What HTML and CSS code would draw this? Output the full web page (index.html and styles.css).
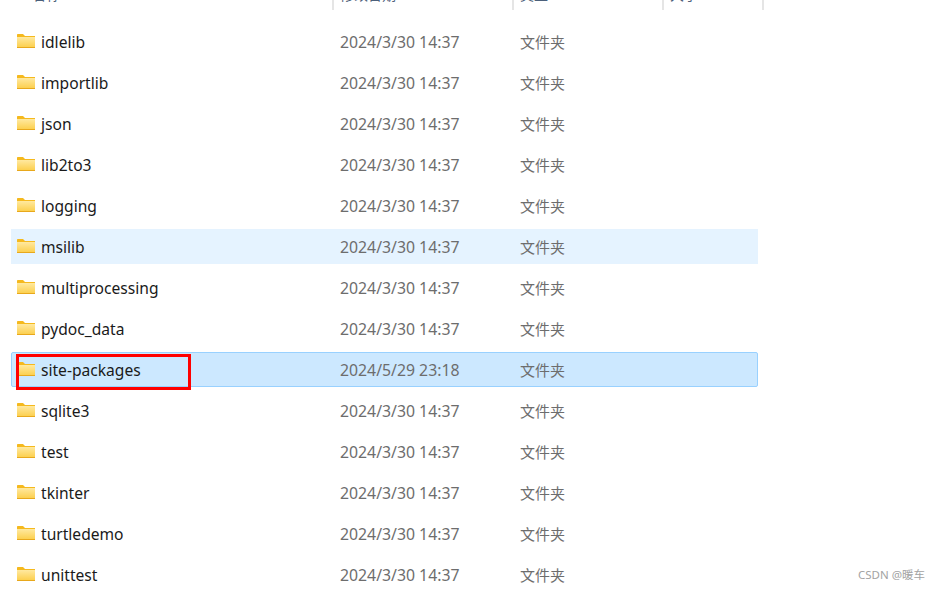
FILE: index.html
```html
<!DOCTYPE html>
<html lang="en">
<head>
    <meta charset="UTF-8">
    <title>Lib</title>
    <link rel="stylesheet" href="styles.css">
</head>
<body>

    <svg class="defs" width="0" height="0">
        <defs>
            <linearGradient id="folder-fill" x1="0" y1="0" x2="0" y2="1">
                <stop offset="0" stop-color="#ffe9a0"/>
                <stop offset="1" stop-color="#fcd050"/>
            </linearGradient>
        </defs>
        <symbol id="folder" viewBox="0 0 18 14">
            <path d="M0 1C0 .4.4 0 1 0H6L8 2H18V5H0Z" fill="#f5b91e"/>
            <path d="M0 3H18V13H0Z" fill="url(#folder-fill)"/>
            <path d="M0 13H18V14H0Z" fill="#e8a81c"/>
        </symbol>
    </svg>

    <!-- Column headers, cut off by the top edge -->
    <div class="header">
        <div class="col-name"><span class="head-text">名称</span></div>
        <div class="col-date"><span class="head-text">修改日期</span></div>
        <div class="col-type"><span class="head-text">类型</span></div>
        <div class="col-size"><span class="head-text">大小</span></div>
    </div>

    <div class="list">
        <div class="row"><svg class="folder"><use href="#folder"/></svg><span class="name">idlelib</span><span class="date">2024/3/30 14:37</span><span class="type">文件夹</span></div>
        <div class="row"><svg class="folder"><use href="#folder"/></svg><span class="name">importlib</span><span class="date">2024/3/30 14:37</span><span class="type">文件夹</span></div>
        <div class="row"><svg class="folder"><use href="#folder"/></svg><span class="name">json</span><span class="date">2024/3/30 14:37</span><span class="type">文件夹</span></div>
        <div class="row"><svg class="folder"><use href="#folder"/></svg><span class="name">lib2to3</span><span class="date">2024/3/30 14:37</span><span class="type">文件夹</span></div>
        <div class="row"><svg class="folder"><use href="#folder"/></svg><span class="name">logging</span><span class="date">2024/3/30 14:37</span><span class="type">文件夹</span></div>
        <div class="row hover"><svg class="folder"><use href="#folder"/></svg><span class="name">msilib</span><span class="date">2024/3/30 14:37</span><span class="type">文件夹</span></div>
        <div class="row"><svg class="folder"><use href="#folder"/></svg><span class="name">multiprocessing</span><span class="date">2024/3/30 14:37</span><span class="type">文件夹</span></div>
        <div class="row"><svg class="folder"><use href="#folder"/></svg><span class="name">pydoc_data</span><span class="date">2024/3/30 14:37</span><span class="type">文件夹</span></div>
        <div class="row selected">
            <svg class="folder"><use href="#folder"/></svg><span class="name">site-packages</span><span class="date">2024/5/29 23:18</span><span class="type">文件夹</span>
            <div class="red-box"></div>
        </div>
        <div class="row"><svg class="folder"><use href="#folder"/></svg><span class="name">sqlite3</span><span class="date">2024/3/30 14:37</span><span class="type">文件夹</span></div>
        <div class="row"><svg class="folder"><use href="#folder"/></svg><span class="name">test</span><span class="date">2024/3/30 14:37</span><span class="type">文件夹</span></div>
        <div class="row"><svg class="folder"><use href="#folder"/></svg><span class="name">tkinter</span><span class="date">2024/3/30 14:37</span><span class="type">文件夹</span></div>
        <div class="row"><svg class="folder"><use href="#folder"/></svg><span class="name">turtledemo</span><span class="date">2024/3/30 14:37</span><span class="type">文件夹</span></div>
        <div class="row"><svg class="folder"><use href="#folder"/></svg><span class="name">unittest</span><span class="date">2024/3/30 14:37</span><span class="type">文件夹</span></div>
    </div>

    <!-- Watermark -->
    <div class="watermark">CSDN @暖车</div>

</body>
</html>
```

FILE: styles.css
```css
body {
    margin: 0;
    height: 590px;
    overflow: hidden;
    background-color: #fff;
    font-family: "Noto Sans", "Noto Sans CJK SC", sans-serif;
    font-size: 15px;
    position: relative;
}

.defs {
    position: absolute;
}

/* Header */
.header {
    display: flex;
    height: 10px;
    overflow: hidden;
}

.header > div {
    box-sizing: border-box;
    height: 10px;
    border-right: 2px solid #e5e5e5;
    display: flex;
    align-items: flex-end;
    overflow: hidden;
}

.col-name {
    width: 334px;
    padding-left: 32px;
}

.col-date {
    width: 180px;
    padding-left: 6px;
}

.col-type {
    width: 150px;
    padding-left: 6px;
}

.col-size {
    width: 100px;
    padding-left: 6px;
}

.head-text {
    color: #4c607a;
    line-height: 20px;
    margin-bottom: 5px;
    flex: none;
    font-size: 14px;
}

/* File rows */
.list {
    display: flex;
    flex-direction: column;
    gap: 6px;
    width: 747px;
    margin: 14px 0 0 11px;
}

.row {
    position: relative;
    flex: none;
    box-sizing: border-box;
    height: 35px;
    display: flex;
    align-items: center;
    padding-left: 6px;
}

.row.hover {
    background-color: #e5f3ff;
}

.row.selected {
    background-color: #cce8ff;
    border: 1px solid #99d1ff;
    border-radius: 2px;
    padding-left: 5px;
}

.folder {
    flex: none;
    width: 18px;
    height: 14px;
    margin-top: -2px;
}

.name {
    width: 299px;
    margin-left: 6px;
    color: #1a1a1a;
    font-size: 15.6px;
}

.date {
    width: 180px;
    color: #6d6d6d;
    font-size: 15.8px;
}

.type {
    color: #6d6d6d;
}

.red-box {
    position: absolute;
    left: 4px;
    top: 1px;
    width: 175px;
    height: 36px;
    box-sizing: border-box;
    border: 3px solid #f00;
}

.watermark {
    position: absolute;
    right: 15px;
    bottom: 8px;
    font-size: 11.5px;
    color: #a3a3a3;
}
```
